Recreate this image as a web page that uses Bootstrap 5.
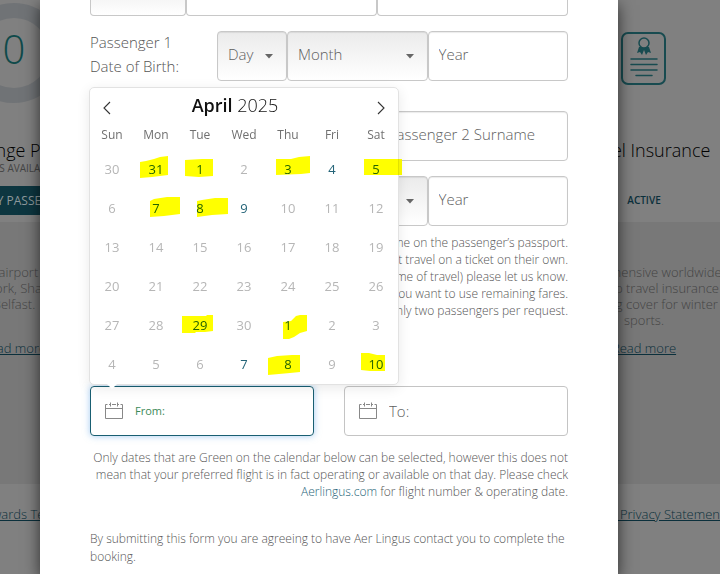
<!DOCTYPE html>
<html lang="en">
<head>
<meta charset="utf-8">
<meta name="viewport" content="width=device-width, initial-scale=1">
<title>Reward flight request</title>
<link href="https://cdn.jsdelivr.net/npm/bootstrap@5.3.0/dist/css/bootstrap.min.css" rel="stylesheet">
<style>
  body { font-family: "Open Sans", "Noto Sans", sans-serif; font-size: 15px; font-weight: 300; line-height: 24px; color: #555; background: #808080; }
  .stage { min-height: 100vh; overflow: hidden; padding-right: 62px; }
  a { color: #1e6478; }

  /* Dimmed page behind the dialog */
  .backdrop-page { inset: 0 62px 0 0; color: #444; font-size: 13px; line-height: 16px; text-align: center; }
  .backdrop-page a { color: #0b303c; }
  .backdrop-row { margin: 0 -300px; }
  .backdrop-row > div { flex: 0 0 315px; }
  .tiles { height: 222px; box-shadow: 0 2px 4px rgba(0,0,0,.12); background: #808080; }
  .infos { height: 262px; background: #787878; padding-top: 42px; }
  .tile-art { height: 138px; padding-top: 3px; }
  .tile-art.cert { padding-top: 32px; }
  .ring { width: 100px; height: 100px; border: 15px solid #707376; border-radius: 50%; font-size: 40px; color: #0f4a4a; padding-bottom: 8px; }
  .tile-title { font-size: 18px; line-height: 24px; color: #000; }
  .tile-note { font-size: 10px; line-height: 12px; font-weight: 400; }
  .buy { background: #0d3640; color: #8d999c; font-size: 12px; line-height: 29px; border: 0; width: 210px; margin-top: 12px; padding: 0; }
  .status { font-size: 10px; line-height: 16px; color: #0b303c; font-weight: 600; margin-top: 30px; }
  .info-text { height: 68px; }
  .legal { padding-top: 22px; }

  /* Dialog */
  .request { max-width: 578px; min-height: 100vh; background: #fff; padding: 0 50px 6px; box-shadow: 0 5px 15px rgba(0,0,0,.65); }
  .field { height: 50px; border: 1px solid #c8c8c8; border-radius: 4px; box-shadow: inset 0 1px 1px rgba(0,0,0,.08); padding: 0 10px 4px; font-size: 15px; font-weight: 300; color: #606060; background-color: #fff; min-width: 0; }
  .field::placeholder { color: #606060; opacity: 1; }
  select.field { appearance: none; background: url("data:image/svg+xml,%3Csvg xmlns='http://www.w3.org/2000/svg' width='8' height='5'%3E%3Cpath d='M0 0h8L4 4.5z' fill='%23666'/%3E%3C/svg%3E") no-repeat right 13px top 22px, linear-gradient(#ebebeb, #fff); }
  .field.cut { height: 16px; border-top: 0; border-radius: 0 0 4px 4px; box-shadow: none; background: #fff; }
  select.field.cut { background: linear-gradient(#f6f6f6, #fff); }
  .w-title { flex: 0 0 20%; }
  .dob-label { flex: 0 0 127px; }
  .f-day { flex: 0 0 70px; }
  .f-third { flex: 1 1 0; }
  .names { margin-top: 30px; }
  .birth { margin-top: 15px; }
  .birth label { margin-top: -1px; margin-bottom: 1px; height: 50px; }
  .fine { font-size: 12px; line-height: 17px; color: #555; }
  .fine a { text-decoration: none; }
  .dates-note { margin-top: 13px; }
  .consent { line-height: 18px; margin-top: 30px; }
  .date-row { gap: 30px; margin-top: 67px; }
  .date-box { flex: 1 1 0; height: 50px; border: 1px solid #c4c4c4; border-radius: 4px; padding: 0 14px; gap: 12px; }
  .date-box input { border: 0; outline: 0; width: 100%; min-width: 0; padding: 0; color: #606060; background: transparent; font-weight: 300; }
  .date-box input::placeholder { color: #606060; opacity: 1; }
  .date-box.active { border-color: #195f72; box-shadow: 0 0 7px rgba(90,160,230,.55); }
  .date-box.active input { font-size: 11px; font-weight: 400; }
  .date-box.active input::placeholder { color: #3c8a58; }

  /* Calendar pop-up */
  .picker { bottom: 50px; left: -2px; width: 310px; background: #fff; border: 1px solid #e2e2e2; border-radius: 5px; box-shadow: 0 3px 13px rgba(0,0,0,.09); z-index: 5; padding-bottom: 1px; }
  .picker::after { content: ""; position: absolute; left: 17px; bottom: -5px; border: 5px solid transparent; border-top-color: #fff; border-bottom: 0; }
  .picker-head { height: 33px; padding: 0 12px; color: #111; font-size: 18px; }
  .picker-month { padding-right: 18px; }
  .picker-head button, .days button { border: 0; background: none; padding: 0; font-weight: inherit; }
  .picker-head button { line-height: 1; padding-top: 2px; }
  .days { table-layout: fixed; width: 308px; text-align: center; font-size: 13px; }
  .days th { height: 28px; font-size: 12px; font-weight: 500; color: #707070; padding: 0; }
  .days td { height: 39px; padding: 0; }
  .days button { color: #246478; font-weight: 400; width: 100%; }
  .days button:disabled { color: #b6b6b6; }
  .marker { inset: 0; mix-blend-mode: multiply; pointer-events: none; overflow: visible; }
</style>
</head>
<body>
<div class="stage position-relative">

  <div class="backdrop-page position-absolute">
    <div class="backdrop-row tiles d-flex justify-content-center">
      <div>
        <div class="tile-art d-flex justify-content-center"><div class="ring d-flex align-items-center justify-content-center">0</div></div>
        <div class="tile-title ps-1">Lounge Pass</div>
        <div class="tile-note">PASSES AVAILABLE</div>
        <button type="button" class="buy">BUY PASSES</button>
      </div>
      <div></div>
      <div>
        <div class="tile-art cert">
          <svg width="46" height="54" viewBox="0 0 46 54" fill="none" stroke="#184b50" stroke-linecap="round">
            <rect x="1" y="1" width="43" height="51" rx="6" stroke-width="2"/>
            <path d="M10 27h26M10 32.500h26M10 38h26M15 43.500h16" stroke-width="1.500"/>
            <path d="M18 15l-2 6 3-1 2 3 2-5 2 5 2-3 3 1-2-6z" fill="#184b50" stroke="none"/>
            <circle cx="23" cy="11" r="5" stroke-width="1.500" fill="#808080"/>
          </svg>
        </div>
        <div class="tile-title">Travel Insurance</div>
        <div class="status">ACTIVE</div>
      </div>
    </div>
    <div class="backdrop-row infos d-flex justify-content-center">
      <div>
        <div class="info-text">Access to airport lounges<br>from Cork, Shannon<br>Belfast.</div>
        <div class="mt-2"><a href="#lounges">Read more</a></div>
      </div>
      <div></div>
      <div>
        <div class="info-text">Comprehensive worldwide<br>multi-trip travel insurance<br>including cover for winter<br>sports.</div>
        <div class="mt-2"><a href="#insurance">Read more</a></div>
      </div>
    </div>
    <div class="backdrop-row legal d-flex justify-content-center">
      <div class="ps-3"><a href="#terms">Rewards Terms</a></div>
      <div></div>
      <div><a href="#privacy">Data and Privacy Statement</a></div>
    </div>
  </div>

  <main class="request position-relative mx-auto">
    <form>
      <div class="d-flex">
        <select class="field cut w-title" aria-label="Passenger 1 title"></select>
        <input class="field cut f-third" type="text" aria-label="Passenger 1 first name">
        <input class="field cut f-third" type="text" aria-label="Passenger 1 surname">
      </div>

      <div class="birth d-flex">
        <label class="dob-label" for="day1">Passenger 1<br>Date of Birth:</label>
        <select class="field f-day" id="day1"><option>Day</option></select>
        <select class="field f-third" aria-label="Month"><option>Month</option></select>
        <input class="field f-third" type="text" placeholder="Year" aria-label="Year">
      </div>

      <div class="names d-flex">
        <select class="field w-title" aria-label="Passenger 2 title"></select>
        <input class="field f-third" type="text" aria-label="Passenger 2 first name">
        <input class="field f-third" type="text" placeholder="Passenger 2 Surname" aria-label="Passenger 2 surname">
      </div>

      <div class="birth d-flex">
        <label class="dob-label" for="day2"></label>
        <select class="field f-day" id="day2" aria-label="Day"></select>
        <select class="field f-third" aria-label="Month"></select>
        <input class="field f-third" type="text" placeholder="Year" aria-label="Year">
      </div>

      <p class="fine text-end mt-2 mb-0">Name on the passenger’s passport.<br>Cannot travel on a ticket on their own.<br>(At time of travel) please let us know.<br>If you want to use remaining fares.<br>Only two passengers per request.</p>

      <div class="date-row d-flex">
        <div class="date-box active position-relative d-flex align-items-center">
          <svg class="flex-shrink-0" width="18" height="18" viewBox="0 0 18 18" fill="none" stroke="#888"><path d="M2.500 2.500h-2v14h17v-14h-2M.5 6.500h17M4 2.500h1.500M7 2.500h4M12.500 2.500H14M5.500.5v4M12.500.5v4"/></svg>
          <input type="text" placeholder="From:" aria-label="From">

          <div class="picker position-absolute">
            <div class="picker-head d-flex align-items-center justify-content-between">
              <button type="button" aria-label="Previous month"><svg width="10" height="14" viewBox="0 0 10 14" fill="none" stroke="#333" stroke-width="1.100"><path d="M8 1L2 7l6 6"/></svg></button>
              <div class="picker-month"><b class="fw-semibold">April</b> 2025</div>
              <button type="button" aria-label="Next month"><svg width="10" height="14" viewBox="0 0 10 14" fill="none" stroke="#333" stroke-width="1.100"><path d="M2 1l6 6-6 6"/></svg></button>
            </div>
            <table class="days">
              <thead><tr><th>Sun</th><th>Mon</th><th>Tue</th><th>Wed</th><th>Thu</th><th>Fri</th><th>Sat</th></tr></thead>
              <tbody>
                <tr><td><button type="button" disabled>30</button></td><td><button type="button">31</button></td><td><button type="button">1</button></td><td><button type="button" disabled>2</button></td><td><button type="button">3</button></td><td><button type="button">4</button></td><td><button type="button">5</button></td></tr>
                <tr><td><button type="button" disabled>6</button></td><td><button type="button">7</button></td><td><button type="button">8</button></td><td><button type="button">9</button></td><td><button type="button" disabled>10</button></td><td><button type="button" disabled>11</button></td><td><button type="button" disabled>12</button></td></tr>
                <tr><td><button type="button" disabled>13</button></td><td><button type="button" disabled>14</button></td><td><button type="button" disabled>15</button></td><td><button type="button" disabled>16</button></td><td><button type="button" disabled>17</button></td><td><button type="button" disabled>18</button></td><td><button type="button" disabled>19</button></td></tr>
                <tr><td><button type="button" disabled>20</button></td><td><button type="button" disabled>21</button></td><td><button type="button" disabled>22</button></td><td><button type="button" disabled>23</button></td><td><button type="button" disabled>24</button></td><td><button type="button" disabled>25</button></td><td><button type="button" disabled>26</button></td></tr>
                <tr><td><button type="button" disabled>27</button></td><td><button type="button" disabled>28</button></td><td><button type="button">29</button></td><td><button type="button" disabled>30</button></td><td><button type="button">1</button></td><td><button type="button" disabled>2</button></td><td><button type="button" disabled>3</button></td></tr>
                <tr><td><button type="button" disabled>4</button></td><td><button type="button" disabled>5</button></td><td><button type="button" disabled>6</button></td><td><button type="button">7</button></td><td><button type="button">8</button></td><td><button type="button" disabled>9</button></td><td><button type="button">10</button></td></tr>
              </tbody>
            </table>
            <svg class="marker position-absolute" width="309" height="296" viewBox="90 88 309 296" fill="#ff0">
              <path d="M140 162l6-1 8-2 6-2 8-1v19l-8 1-8 1-12 1z"/>
              <path d="M185 160l17-1h11v17l-14 1-14-1z"/>
              <path d="M276 159h15l8-2 11-1v17l-9 1-25 1z"/>
              <path d="M364 159h38v16h-38z"/>
              <path d="M150 201l4-2 13-2h13v17l-16 2-14 1z"/>
              <path d="M197 201l5-1 13-2h13v16l-16 1-15 2z"/>
              <path d="M182 316h24l1-1h6v16l-8 1h-9l-1 1h-13z"/>
              <path d="M283 322l8-1 5-5 4-1h7v16l-7 2-6 4-5 2h-6z"/>
              <path d="M268 358l9-2 15-1h8v17l-10 1-11 1-11 1z"/>
              <path d="M361 353h8l8 2h8v16h-15l-9-1z"/>
            </svg>
          </div>
        </div>
        <div class="date-box d-flex align-items-center">
          <svg class="flex-shrink-0" width="18" height="18" viewBox="0 0 18 18" fill="none" stroke="#888"><path d="M2.500 2.500h-2v14h17v-14h-2M.5 6.500h17M4 2.500h1.500M7 2.500h4M12.500 2.500H14M5.500.5v4M12.500.5v4"/></svg>
          <input type="text" placeholder="To:" aria-label="To">
        </div>
      </div>

      <p class="fine dates-note text-end mb-0">Only dates that are Green on the calendar below can be selected, however this does not mean that your preferred flight is in fact operating or available on that day. Please check <a href="#aerlingus">Aerlingus.com</a> for flight number &amp; operating date.</p>
      <p class="fine consent mb-0">By submitting this form you are agreeing to have Aer Lingus contact you to complete the booking.</p>
    </form>
  </main>
</div>
<script src="https://cdn.jsdelivr.net/npm/bootstrap@5.3.0/dist/js/bootstrap.bundle.min.js"></script>
</body>
</html>
